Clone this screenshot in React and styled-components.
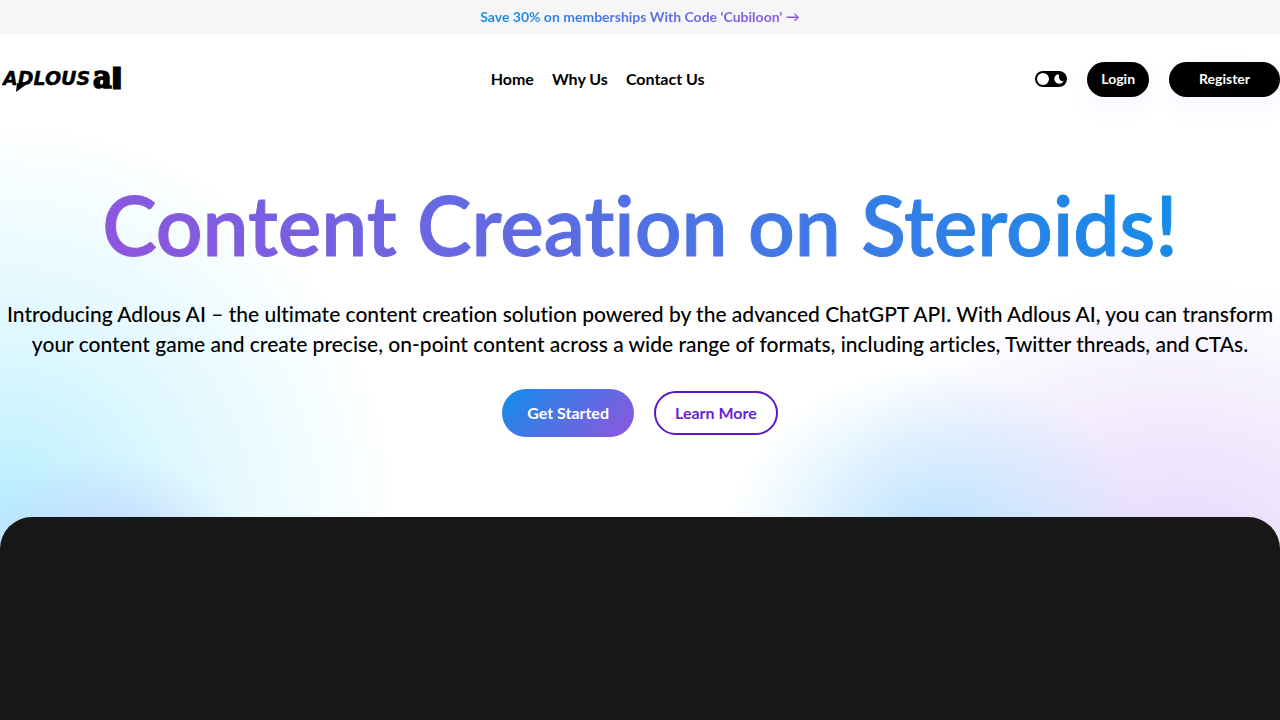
import { useState } from 'react';
import styled, { createGlobalStyle } from 'styled-components';

const GlobalStyle = createGlobalStyle`
    * {
        box-sizing: border-box;
    }

    body {
        margin: 0;
        background: #fff;
        color: #000;
        font-family: Lato, "Open Sans", sans-serif;
        font-variant-ligatures: none;
    }

    #root {
        min-height: 100vh;
        display: flex;
    }
`;

// Page wrapper with the soft colour clouds behind the hero
const Page = styled.div`
    flex: 1;
    display: flex;
    flex-direction: column;
    min-width: 0;
    background:
        radial-gradient(ellipse 150px 110px at 105px 565px, rgba(190, 205, 255, 0.8), rgba(190, 210, 255, 0.5) 50%, rgba(190, 215, 255, 0) 100%),
        radial-gradient(ellipse 400px 400px at 0 520px, rgba(175, 235, 255, 0.9), rgba(200, 243, 255, 0.6) 45%, rgba(230, 252, 255, 0) 100%),
        radial-gradient(ellipse 210px 185px at 73% 550px, rgba(170, 220, 255, 0.8), rgba(185, 228, 255, 0.6) 40%, rgba(225, 248, 255, 0) 100%),
        radial-gradient(ellipse 380px 310px at 92% 590px, rgba(224, 210, 252, 0.9), rgba(232, 220, 252, 0.7) 45%, rgba(245, 240, 255, 0) 100%),
        #fff;
`;

const Banner = styled.div`
    height: 34px;
    display: flex;
    align-items: center;
    justify-content: center;
    background: #f6f6f9;
`;

const BannerLink = styled.a`
    font-size: 14px;
    line-height: 20px;
    font-weight: 700;
    text-decoration: none;
    color: transparent;
    background: linear-gradient(90deg, #108ee9, #4c74df 45%, #9254de);
    background-clip: text;
`;

const Header = styled.header`
    display: flex;
    align-items: center;
    justify-content: space-between;
    height: 90px;
`;

const Logo = styled.a`
    display: flex;
    width: 160px;
    padding-left: 2px;
    color: #000;
`;

const Nav = styled.nav`
    display: flex;
    gap: 18px;
`;

const NavLink = styled.a`
    font-size: 16px;
    line-height: 24px;
    font-weight: 700;
    color: #000;
    text-decoration: none;
`;

const Actions = styled.div`
    display: flex;
    align-items: center;
    gap: 20px;
`;

const Toggle = styled.label`
    display: flex;
    align-items: center;
    justify-content: space-between;
    width: 32px;
    height: 16px;
    padding: 0 2px;
    border-radius: 8px;
    background: #000;
    cursor: pointer;
    flex-direction: ${props => (props.$dark ? 'row-reverse' : 'row')};
`;

const ToggleInput = styled.input`
    appearance: none;
    width: 12px;
    height: 12px;
    margin: 0;
    border-radius: 50%;
    background: #fff;
    cursor: pointer;
`;

const HeaderButton = styled.button`
    height: 35px;
    padding: 0 ${props => (props.$wide ? 30 : 14)}px;
    border: none;
    border-radius: 18px;
    background: #000;
    color: #fff;
    font-family: inherit;
    font-size: 14px;
    line-height: 20px;
    font-weight: 700;
    box-shadow: 0 10px 24px rgba(108, 70, 255, 0.06);
    cursor: pointer;
`;

const Hero = styled.main`
    display: flex;
    flex-direction: column;
    align-items: center;
    padding: 52px 0 80px;
    text-align: center;
`;

const Title = styled.h1`
    margin: 0;
    font-size: 82px;
    line-height: 96px;
    font-weight: 600;
    color: transparent;
    background: linear-gradient(45deg, #9254de, #108ee9);
    background-clip: text;
    -webkit-text-stroke: 1px transparent;
`;

const Intro = styled.p`
    margin: 27px 0 30px;
    font-size: 21px;
    line-height: 30px;
    font-weight: 500;
`;

const ButtonRow = styled.div`
    display: flex;
    align-items: center;
    gap: 20px;
`;

const HeroButton = styled.button`
    height: ${props => (props.$outline ? 44 : 48)}px;
    padding: 0 ${props => (props.$outline ? 19 : 25)}px;
    border: ${props => (props.$outline ? '2px solid #5b18c8' : 'none')};
    border-radius: 24px;
    background: ${props => (props.$outline ? '#fff' : 'linear-gradient(135deg, #108ee9, #9254de)')};
    color: ${props => (props.$outline ? '#6a1fdc' : '#fff')};
    font-family: inherit;
    font-size: 16px;
    line-height: 24px;
    font-weight: 700;
    cursor: pointer;
`;

const DarkPanel = styled.section`
    flex: 1;
    min-height: 200px;
    border-radius: 32px 32px 0 0;
    background: #171717;
`;

function LogoMark() {
    return (
        <svg width="124" height="44" viewBox="0 0 124 44" role="img" aria-label="Adlous AI">
            <g fill="currentColor" stroke="currentColor" fontFamily="DejaVu Sans, sans-serif" fontWeight="700">
                <text x="1" y="28" fontSize="19" fontStyle="italic" strokeWidth="0.4">ADLOUS</text>
                <text x="91" y="31" fontSize="32" fontFamily="DejaVu Serif Condensed, DejaVu Serif, serif" strokeWidth="1.6">a</text>
                <text x="110" y="31" fontSize="26" strokeWidth="3">I</text>
            </g>
            {/* Pointed tail under the wordmark */}
            <path d="M15 26l10 1-11 8Z" fill="currentColor" />
        </svg>
    );
}

function App() {
    const [dark, setDark] = useState(false);

    return (
        <Page>
            <GlobalStyle />
            <Banner>
                <BannerLink href="#memberships">Save 30% on memberships With Code ‘Cubiloon’ →</BannerLink>
            </Banner>

            {/* Top navigation */}
            <Header>
                <Logo href="#home">
                    <LogoMark />
                </Logo>
                <Nav>
                    <NavLink href="#home">Home</NavLink>
                    <NavLink href="#why-us">Why Us</NavLink>
                    <NavLink href="#contact">Contact Us</NavLink>
                </Nav>
                <Actions>
                    <Toggle $dark={dark}>
                        <ToggleInput
                            type="checkbox"
                            aria-label="Dark mode"
                            checked={dark}
                            onChange={(e) => setDark(e.target.checked)}
                        />
                        <svg width="12" height="12" viewBox="0 0 12 12" aria-hidden="true">
                            <path d="M4 1.4A4.9 4.9 0 1 0 10.8 7.4 2.6 2.6 0 0 1 7 6.8C5.8 5.6 5.6 3.6 6.4 1.8Z" fill="#fff" />
                        </svg>
                    </Toggle>
                    <HeaderButton>Login</HeaderButton>
                    <HeaderButton $wide>Register</HeaderButton>
                </Actions>
            </Header>

            <Hero>
                <Title>Content Creation on Steroids!</Title>
                <Intro>
                    Introducing Adlous AI – the ultimate content creation solution powered by the advanced ChatGPT
                    API. With Adlous AI, you can transform your content game and create precise, on-point content
                    across a wide range of formats, including articles, Twitter threads, and CTAs.
                </Intro>
                <ButtonRow>
                    <HeroButton>Get Started</HeroButton>
                    <HeroButton $outline>Learn More</HeroButton>
                </ButtonRow>
            </Hero>

            <DarkPanel />
        </Page>
    );
}

export default App;
